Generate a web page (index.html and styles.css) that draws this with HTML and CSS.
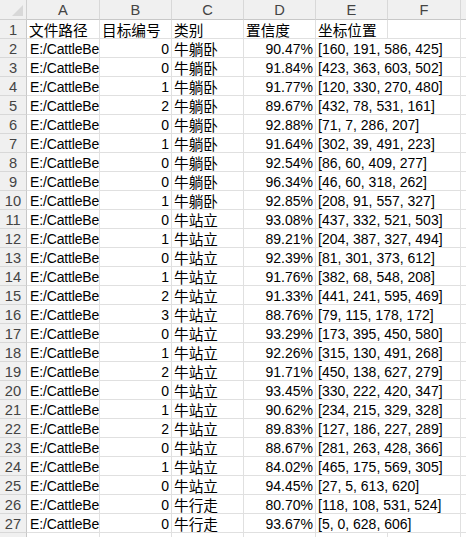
FILE: index.html
```html
<!DOCTYPE html>
<html>
<head>
<meta charset="utf-8">
<link rel="stylesheet" href="styles.css">
</head>
<body>
<div class="sheet">
  <div class="corner"><span class="tri"></span></div>
  <div class="ch">A</div><div class="ch">B</div><div class="ch">C</div><div class="ch">D</div><div class="ch">E</div><div class="ch">F</div><div class="ch last"></div>

  <div class="rh">1</div>
  <div class="c zh">文件路径</div><div class="c zh">目标编号</div><div class="c zh">类别</div><div class="c zh">置信度</div><div class="c zh">坐标位置</div><div class="c"></div><div class="c last"></div>

  <div class="rh">2</div><div class="c a">E:/CattleBe</div><div class="c n">0</div><div class="c zh">牛躺卧</div><div class="c n">90.47%</div><div class="c e">[160, 191, 586, 425]</div><div class="c last"></div>
  <div class="rh">3</div><div class="c a">E:/CattleBe</div><div class="c n">0</div><div class="c zh">牛躺卧</div><div class="c n">91.84%</div><div class="c e">[423, 363, 603, 502]</div><div class="c last"></div>
  <div class="rh">4</div><div class="c a">E:/CattleBe</div><div class="c n">1</div><div class="c zh">牛躺卧</div><div class="c n">91.77%</div><div class="c e">[120, 330, 270, 480]</div><div class="c last"></div>
  <div class="rh">5</div><div class="c a">E:/CattleBe</div><div class="c n">2</div><div class="c zh">牛躺卧</div><div class="c n">89.67%</div><div class="c e">[432, 78, 531, 161]</div><div class="c last"></div>
  <div class="rh">6</div><div class="c a">E:/CattleBe</div><div class="c n">0</div><div class="c zh">牛躺卧</div><div class="c n">92.88%</div><div class="c e">[71, 7, 286, 207]</div><div class="c last"></div>
  <div class="rh">7</div><div class="c a">E:/CattleBe</div><div class="c n">1</div><div class="c zh">牛躺卧</div><div class="c n">91.64%</div><div class="c e">[302, 39, 491, 223]</div><div class="c last"></div>
  <div class="rh">8</div><div class="c a">E:/CattleBe</div><div class="c n">0</div><div class="c zh">牛躺卧</div><div class="c n">92.54%</div><div class="c e">[86, 60, 409, 277]</div><div class="c last"></div>
  <div class="rh">9</div><div class="c a">E:/CattleBe</div><div class="c n">0</div><div class="c zh">牛躺卧</div><div class="c n">96.34%</div><div class="c e">[46, 60, 318, 262]</div><div class="c last"></div>
  <div class="rh">10</div><div class="c a">E:/CattleBe</div><div class="c n">1</div><div class="c zh">牛躺卧</div><div class="c n">92.85%</div><div class="c e">[208, 91, 557, 327]</div><div class="c last"></div>
  <div class="rh">11</div><div class="c a">E:/CattleBe</div><div class="c n">0</div><div class="c zh">牛站立</div><div class="c n">93.08%</div><div class="c e">[437, 332, 521, 503]</div><div class="c last"></div>
  <div class="rh">12</div><div class="c a">E:/CattleBe</div><div class="c n">1</div><div class="c zh">牛站立</div><div class="c n">89.21%</div><div class="c e">[204, 387, 327, 494]</div><div class="c last"></div>
  <div class="rh">13</div><div class="c a">E:/CattleBe</div><div class="c n">0</div><div class="c zh">牛站立</div><div class="c n">92.39%</div><div class="c e">[81, 301, 373, 612]</div><div class="c last"></div>
  <div class="rh">14</div><div class="c a">E:/CattleBe</div><div class="c n">1</div><div class="c zh">牛站立</div><div class="c n">91.76%</div><div class="c e">[382, 68, 548, 208]</div><div class="c last"></div>
  <div class="rh">15</div><div class="c a">E:/CattleBe</div><div class="c n">2</div><div class="c zh">牛站立</div><div class="c n">91.33%</div><div class="c e">[441, 241, 595, 469]</div><div class="c last"></div>
  <div class="rh">16</div><div class="c a">E:/CattleBe</div><div class="c n">3</div><div class="c zh">牛站立</div><div class="c n">88.76%</div><div class="c e">[79, 115, 178, 172]</div><div class="c last"></div>
  <div class="rh">17</div><div class="c a">E:/CattleBe</div><div class="c n">0</div><div class="c zh">牛站立</div><div class="c n">93.29%</div><div class="c e">[173, 395, 450, 580]</div><div class="c last"></div>
  <div class="rh">18</div><div class="c a">E:/CattleBe</div><div class="c n">1</div><div class="c zh">牛站立</div><div class="c n">92.26%</div><div class="c e">[315, 130, 491, 268]</div><div class="c last"></div>
  <div class="rh">19</div><div class="c a">E:/CattleBe</div><div class="c n">2</div><div class="c zh">牛站立</div><div class="c n">91.71%</div><div class="c e">[450, 138, 627, 279]</div><div class="c last"></div>
  <div class="rh">20</div><div class="c a">E:/CattleBe</div><div class="c n">0</div><div class="c zh">牛站立</div><div class="c n">93.45%</div><div class="c e">[330, 222, 420, 347]</div><div class="c last"></div>
  <div class="rh">21</div><div class="c a">E:/CattleBe</div><div class="c n">1</div><div class="c zh">牛站立</div><div class="c n">90.62%</div><div class="c e">[234, 215, 329, 328]</div><div class="c last"></div>
  <div class="rh">22</div><div class="c a">E:/CattleBe</div><div class="c n">2</div><div class="c zh">牛站立</div><div class="c n">89.83%</div><div class="c e">[127, 186, 227, 289]</div><div class="c last"></div>
  <div class="rh">23</div><div class="c a">E:/CattleBe</div><div class="c n">0</div><div class="c zh">牛站立</div><div class="c n">88.67%</div><div class="c e">[281, 263, 428, 366]</div><div class="c last"></div>
  <div class="rh">24</div><div class="c a">E:/CattleBe</div><div class="c n">1</div><div class="c zh">牛站立</div><div class="c n">84.02%</div><div class="c e">[465, 175, 569, 305]</div><div class="c last"></div>
  <div class="rh">25</div><div class="c a">E:/CattleBe</div><div class="c n">0</div><div class="c zh">牛站立</div><div class="c n">94.45%</div><div class="c e">[27, 5, 613, 620]</div><div class="c last"></div>
  <div class="rh">26</div><div class="c a">E:/CattleBe</div><div class="c n">0</div><div class="c zh">牛行走</div><div class="c n">80.70%</div><div class="c e">[118, 108, 531, 524]</div><div class="c last"></div>
  <div class="rh">27</div><div class="c a">E:/CattleBe</div><div class="c n">0</div><div class="c zh">牛行走</div><div class="c n">93.67%</div><div class="c e">[5, 0, 628, 606]</div><div class="c last"></div>

  <div class="rh"></div><div class="c"></div><div class="c"></div><div class="c"></div><div class="c"></div><div class="c"></div><div class="c"></div><div class="c last"></div>
</div>
</body>
</html>
```
FILE: styles.css
```css
html, body {
  margin: 0;
  padding: 0;
  background: #ffffff;
}
.sheet {
  display: grid;
  grid-template-columns: 27px 73px 72px 72px 72px 72px 73px 1fr;
  grid-template-rows: 20px;
  grid-auto-rows: 19px;
  width: 466px;
  height: 537px;
  overflow: hidden;
  font-family: "Liberation Sans", Arial, "Noto Sans CJK SC", sans-serif;
  font-size: 14px;
  color: #000;
}
.sheet > div {
  box-sizing: border-box;
  white-space: nowrap;
  min-width: 0;
}
.corner {
  position: relative;
  background: #f0f0f0;
  border-right: 1px solid #d0d0d0;
  border-bottom: 1px solid #d0d0d0;
}
.tri {
  position: absolute;
  right: 3px;
  bottom: 3px;
  width: 0;
  height: 0;
  border-left: 11px solid transparent;
  border-bottom: 11px solid #d8d8d8;
}
.ch {
  background: #f0f0f0;
  border-right: 1px solid #d8d8d8;
  border-bottom: 1px solid #c8c8c8;
  text-align: center;
  color: #444;
  font-size: 14.67px;
  line-height: 16px;
  padding-top: 2px;
}
.ch.last {
  border-right: none;
}
.rh {
  background: #f0f0f0;
  border-right: 1px solid #c8c8c8;
  border-bottom: 1px solid #d8d8d8;
  text-align: center;
  color: #444;
  font-size: 14.67px;
  line-height: 16px;
  padding-top: 2px;
}
.c {
  background: #fff;
  border-right: 1px solid #e0e0e0;
  border-bottom: 1px solid #e0e0e0;
  line-height: 16px;
  padding: 2px 2px 0 3px;
}
.c.last {
  border-right: none;
}
.a {
  padding-left: 3px;
  padding-right: 0;
  letter-spacing: -0.15px;
}
.n {
  text-align: right;
}
.e {
  grid-column: span 2;
  padding-left: 2px;
}
.zh {
  font-family: "Noto Sans CJK SC", sans-serif;
  font-size: 14.67px;
  padding-left: 2px;
  line-height: 16px;
}
```
